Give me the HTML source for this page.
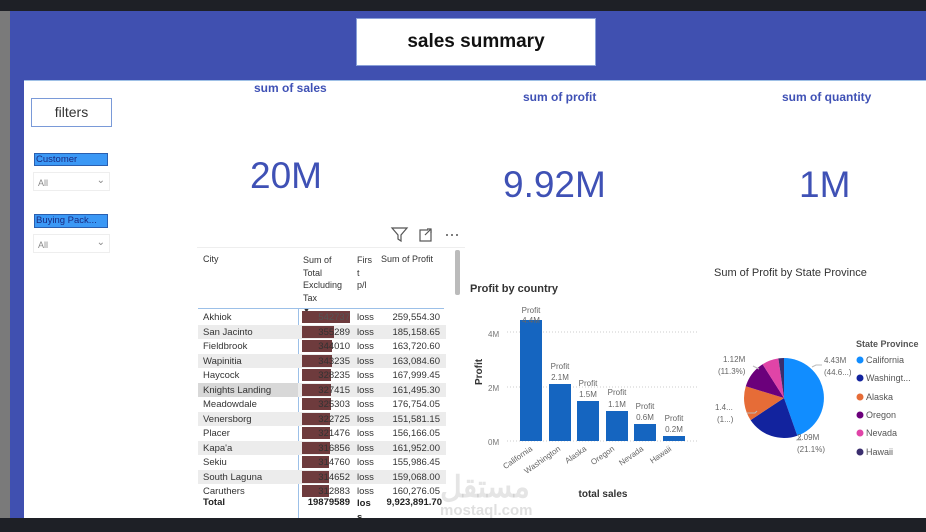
<!DOCTYPE html>
<html><head><meta charset="utf-8"><style>
*{margin:0;padding:0;box-sizing:border-box}
body{width:926px;height:532px;overflow:hidden;position:relative;background:#fff;font-family:"Liberation Sans",sans-serif}
.a{position:absolute;white-space:nowrap}
.kt{color:#3f51b5;font-weight:bold;font-size:12px}
.kv{color:#3f51b5;font-size:37px}
.r{position:absolute;left:198px;width:248px;height:14.5px;font-size:9.5px;color:#333}
.r span{position:absolute;top:2px}
.g{background:#ececec}
.bar{position:absolute;left:104px;height:12px;top:1px;background:#6e3b3d}
</style></head><body>
<div class="a" style="left:0;top:0;width:926px;height:11px;background:#1e2026"></div>
<div class="a" style="left:0;top:11px;width:10px;height:510px;background:#7a7a7a"></div>
<div class="a" style="left:10px;top:11px;width:916px;height:510px;background:#4050b0"></div>
<div class="a" style="left:24px;top:80px;width:902px;height:438px;background:#fff;border-top:1px solid #9fc0e6"></div>
<div class="a" style="left:0;top:518px;width:926px;height:14px;background:#1e2026"></div>

<div class="a" style="left:356px;top:18px;width:240px;height:48px;background:#fff;border:1px solid #8aa0d8;text-align:center;line-height:46px;font-weight:bold;font-size:19px;color:#111">sales summary</div>

<div class="a" style="left:31px;top:98px;width:81px;height:29px;border:1px solid #7a9ad8;text-align:center;line-height:27px;font-size:14px;color:#333">filters</div>
<div class="a" style="left:34px;top:153px;width:74px;height:13px;background:#3b98f5;border:1px solid #2a5fb0;font-size:9.5px;color:#1a2a80;padding-left:1px;line-height:11px">Customer</div>
<div class="a" style="left:33px;top:172px;width:77px;height:19px;border:1px solid #eee;font-size:9px;color:#888;padding:5px 4px">All<span style="position:absolute;right:4px;top:2px;font-size:10px">&#8964;</span></div>
<div class="a" style="left:34px;top:214px;width:74px;height:14px;background:#3b98f5;border:1px solid #2a5fb0;font-size:9.5px;color:#1a2a80;padding-left:1px;line-height:12px">Buying Pack...</div>
<div class="a" style="left:33px;top:234px;width:77px;height:19px;border:1px solid #eee;font-size:9px;color:#888;padding:5px 4px">All<span style="position:absolute;right:4px;top:2px;font-size:10px">&#8964;</span></div>

<div class="a kt" style="left:254px;top:81px">sum of sales</div>
<div class="a kv" style="left:250px;top:155px">20M</div>
<div class="a kt" style="left:523px;top:90px">sum of profit</div>
<div class="a kv" style="left:503px;top:164px">9.92M</div>
<div class="a kt" style="left:782px;top:90px">sum of quantity</div>
<div class="a kv" style="left:799px;top:164px">1M</div>

<svg class="a" style="left:390px;top:226px" width="75" height="18"><path d="M2 2h15l-6 7v6l-3-2v-4z" fill="none" stroke="#555" stroke-width="1.2"/><rect x="30" y="4" width="11" height="11" fill="none" stroke="#555" stroke-width="1.2"/><path d="M35 9l6-6M37 3h4v4" stroke="#555" fill="#fff" stroke-width="1.2"/><circle cx="57" cy="9" r="1" fill="#555"/><circle cx="62" cy="9" r="1" fill="#555"/><circle cx="67" cy="9" r="1" fill="#555"/></svg>

<div class="a" style="left:197px;top:247px;width:268px;height:271px;border-top:1px solid #eee"></div>
<div class="a" style="left:455px;top:250px;width:5px;height:45px;background:#bbb;border-radius:2px"></div>
<div class="a" style="left:298px;top:308px;width:1px;height:210px;background:#9cc0e8"></div>
<div class="a" style="left:198px;top:308px;width:246px;height:1px;background:#9cc0e8"></div>
<div class="a" style="left:203px;top:254px;font-size:9px;color:#333">City</div>
<div class="a" style="left:303px;top:254px;font-size:9px;color:#333;line-height:12.5px">Sum of<br>Total<br>Excluding<br>Tax<br><span style="font-size:7px">▼</span></div>
<div class="a" style="left:357px;top:254px;font-size:9px;color:#333;line-height:12.5px">Firs<br>t<br>p/l</div>
<div class="a" style="left:381px;top:254px;font-size:9px;color:#333">Sum of Profit</div>

<div class="r" style="top:310px"><span style="left:5px">Akhiok</span><div class="bar" style="width:48px"></div><span style="left:108px;width:44px;text-align:right;color:#555">542737</span><span style="left:159px">loss</span><span style="right:6px">259,554.30</span></div>
<div class="r g" style="top:324.5px"><span style="left:5px">San Jacinto</span><div class="bar" style="width:32px"></div><span style="left:108px;width:44px;text-align:right">355289</span><span style="left:159px">loss</span><span style="right:6px">185,158.65</span></div>
<div class="r" style="top:339px"><span style="left:5px">Fieldbrook</span><div class="bar" style="width:30px"></div><span style="left:108px;width:44px;text-align:right">344010</span><span style="left:159px">loss</span><span style="right:6px">163,720.60</span></div>
<div class="r g" style="top:353.5px"><span style="left:5px">Wapinitia</span><div class="bar" style="width:30px"></div><span style="left:108px;width:44px;text-align:right">343235</span><span style="left:159px">loss</span><span style="right:6px">163,084.60</span></div>
<div class="r" style="top:368px"><span style="left:5px">Haycock</span><div class="bar" style="width:29px"></div><span style="left:108px;width:44px;text-align:right">328235</span><span style="left:159px">loss</span><span style="right:6px">167,999.45</span></div>
<div class="r" style="top:382.5px;background:#ececec"><span style="left:0;width:100px;height:14px;top:0;background:#d8d8d8"></span><span style="left:5px">Knights Landing</span><div class="bar" style="width:29px"></div><span style="left:108px;width:44px;text-align:right">327415</span><span style="left:159px">loss</span><span style="right:6px">161,495.30</span></div>
<div class="r" style="top:397px"><span style="left:5px">Meadowdale</span><div class="bar" style="width:29px"></div><span style="left:108px;width:44px;text-align:right">325303</span><span style="left:159px">loss</span><span style="right:6px">176,754.05</span></div>
<div class="r g" style="top:411.5px"><span style="left:5px">Venersborg</span><div class="bar" style="width:28px"></div><span style="left:108px;width:44px;text-align:right">322725</span><span style="left:159px">loss</span><span style="right:6px">151,581.15</span></div>
<div class="r" style="top:426px"><span style="left:5px">Placer</span><div class="bar" style="width:28px"></div><span style="left:108px;width:44px;text-align:right">321476</span><span style="left:159px">loss</span><span style="right:6px">156,166.05</span></div>
<div class="r g" style="top:440.5px"><span style="left:5px">Kapa'a</span><div class="bar" style="width:28px"></div><span style="left:108px;width:44px;text-align:right">316856</span><span style="left:159px">loss</span><span style="right:6px">161,952.00</span></div>
<div class="r" style="top:455px"><span style="left:5px">Sekiu</span><div class="bar" style="width:27px"></div><span style="left:108px;width:44px;text-align:right">314760</span><span style="left:159px">loss</span><span style="right:6px">155,986.45</span></div>
<div class="r g" style="top:469.5px"><span style="left:5px">South Laguna</span><div class="bar" style="width:27px"></div><span style="left:108px;width:44px;text-align:right">314652</span><span style="left:159px">loss</span><span style="right:6px">159,068.00</span></div>
<div class="r" style="top:484px"><span style="left:5px">Caruthers</span><div class="bar" style="width:27px"></div><span style="left:108px;width:44px;text-align:right">312883</span><span style="left:159px">loss</span><span style="right:6px">160,276.05</span></div>
<div class="r" style="top:495px;font-weight:bold;color:#222"><span style="left:5px">Total</span><span style="left:104px;width:48px;text-align:right">19879589</span><span style="left:159px;line-height:14px">los<br>s</span><span style="right:4px">9,923,891.70</span></div>

<svg class="a" style="left:463px;top:260px" width="463" height="258" font-family="Liberation Sans, sans-serif">
<text x="7" y="32" font-size="11" font-weight="bold" fill="#333">Profit by country</text>
<text x="19" y="125" font-size="10" font-weight="bold" fill="#333" transform="rotate(-90 19 125)">Profit</text>
<g font-size="8" fill="#777"><text x="25" y="77">4M</text><text x="25" y="131">2M</text><text x="25" y="185">0M</text></g>
<g stroke="#ccc" stroke-dasharray="1 2"><line x1="44" y1="72" x2="236" y2="72"/><line x1="44" y1="127" x2="236" y2="127"/><line x1="44" y1="181" x2="236" y2="181"/></g>
<g fill="#1565c0"><rect x="57" y="60" width="22" height="121"/><rect x="86" y="124" width="22" height="57"/><rect x="114" y="141" width="22" height="40"/><rect x="143" y="151" width="22" height="30"/><rect x="171" y="164" width="22" height="17"/><rect x="200" y="176" width="22" height="5"/></g>
<g font-size="8" fill="#666" text-anchor="middle">
<text x="68" y="53">Profit</text><text x="68" y="63">4.4M</text>
<text x="97" y="109">Profit</text><text x="97" y="120">2.1M</text>
<text x="125" y="126">Profit</text><text x="125" y="137">1.5M</text>
<text x="154" y="135">Profit</text><text x="154" y="147">1.1M</text>
<text x="182" y="149">Profit</text><text x="182" y="160">0.6M</text>
<text x="211" y="161">Profit</text><text x="211" y="172">0.2M</text></g>
<g font-size="8" fill="#666" text-anchor="end">
<text transform="translate(70 190) rotate(-35)">California</text>
<text transform="translate(98 190) rotate(-35)">Washington</text>
<text transform="translate(124 190) rotate(-35)">Alaska</text>
<text transform="translate(152 190) rotate(-35)">Oregon</text>
<text transform="translate(181 190) rotate(-35)">Nevada</text>
<text transform="translate(209 190) rotate(-35)">Hawaii</text></g>
<text x="140" y="237" font-size="10" font-weight="bold" fill="#333" text-anchor="middle">total sales</text>

<text x="251" y="16" font-size="11" fill="#333">Sum of Profit by State Province</text>
<g transform="translate(321 138)">
<path d="M0 0L0 -40A40 40 0 0 1 13.3 37.7Z" fill="#118dff"/>
<path d="M0 0L13.3 37.7A40 40 0 0 1 -33.4 22.1Z" fill="#12239e"/>
<path d="M0 0L-33.4 22.1A40 40 0 0 1 -38.2 -11.7Z" fill="#e66c37"/>
<path d="M0 0L-38.2 -11.7A40 40 0 0 1 -21.4 -33.8Z" fill="#6b007b"/>
<path d="M0 0L-21.4 -33.8A40 40 0 0 1 -5.6 -39.6Z" fill="#e044a7"/>
<path d="M0 0L-5.6 -39.6A40 40 0 0 1 0 -40Z" fill="#3a2e6e"/>
</g>
<g stroke="#bbb" fill="none"><path d="M349 107l4-2h6"/><path d="M335 175l3 5h-5"/><path d="M290 106l6 3"/><path d="M284 153h8l2-2"/></g>
<g font-size="8" fill="#666">
<text x="361" y="103">4.43M</text><text x="361" y="115">(44.6...)</text>
<text x="334" y="180">2.09M</text><text x="334" y="192">(21.1%)</text>
<text x="260" y="102">1.12M</text><text x="255" y="114">(11.3%)</text>
<text x="252" y="150">1.4...</text><text x="254" y="162">(1...)</text></g>
<text x="393" y="87" font-size="9" font-weight="bold" fill="#555">State Province</text>
<g font-size="9" fill="#555">
<circle cx="397" cy="100" r="3.5" fill="#118dff"/><text x="403" y="103">California</text>
<circle cx="397" cy="118" r="3.5" fill="#12239e"/><text x="403" y="121">Washingt...</text>
<circle cx="397" cy="137" r="3.5" fill="#e66c37"/><text x="403" y="140">Alaska</text>
<circle cx="397" cy="155" r="3.5" fill="#6b007b"/><text x="403" y="158">Oregon</text>
<circle cx="397" cy="173" r="3.5" fill="#e044a7"/><text x="403" y="176">Nevada</text>
<circle cx="397" cy="192" r="3.5" fill="#3a2e6e"/><text x="403" y="195">Hawaii</text></g>
</svg>
<div class="a" style="left:440px;top:470px;font-size:30px;font-weight:bold;color:rgba(150,150,150,0.25)">مستقل</div>
<div class="a" style="left:440px;top:502px;font-size:15px;font-weight:bold;color:rgba(150,150,150,0.3)">mostaql.com</div>
</body></html>
